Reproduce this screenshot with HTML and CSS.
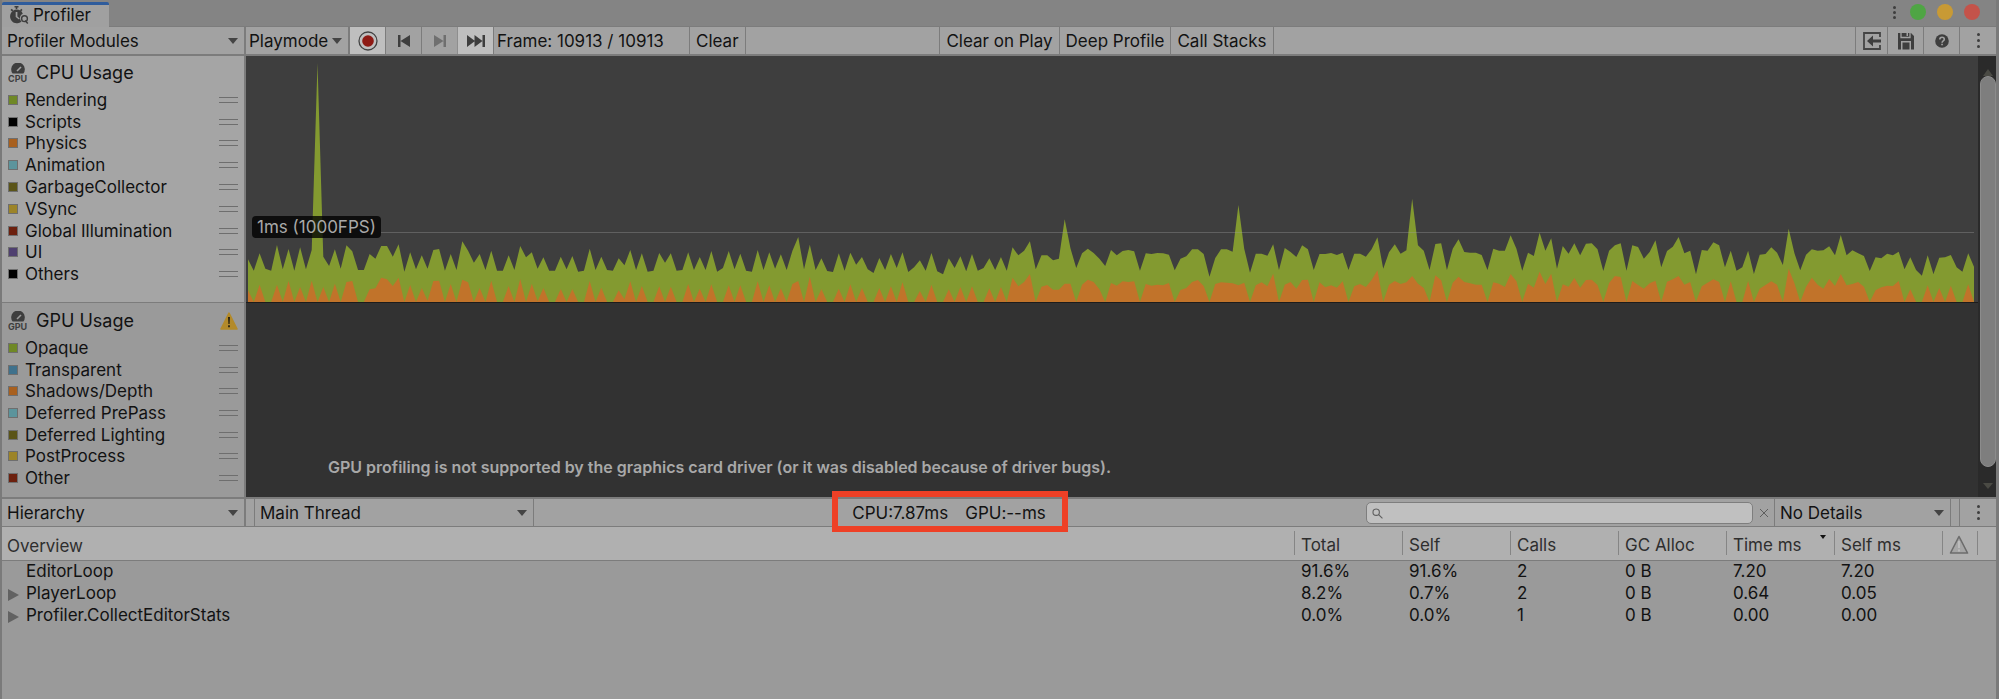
FILE: index.html
```html
<!DOCTYPE html>
<html lang="en">
<head>
  <meta charset="UTF-8"/>
  <meta name="viewport" content="width=device-width,initial-scale=1.0"/>
  <title>Profiler</title>
  <link rel="stylesheet" href="styles.css">
</head>
<body>
  <header class="titlebar">
    <div class="tab">
      <svg class="tab-icon" viewBox="0 0 20 18" width="20" height="18" aria-hidden="true">
        <path d="M5.500 0h4v1.500h-1.200v1.500h-1.600V1.500H5.500z"/>
        <path d="M1.500 4l1.200-1.200 1.600 1.400-1.200 1.200zM12.300 2.800L13.500 4l-1.400 1.400-1.200-1.200z"/>
        <path fill-rule="evenodd" d="M7.500 3.500a6.800 6.800 0 0 1 6.300 4.200c-1.800.8-2.800 2.400-2.800 4.300 0 1.500.5 2.800 1.500 3.600A6.900 6.900 0 1 1 7.500 3.500zM6.700 6v5l3.300 2.500.7-1-2.300-1.900V6z"/>
        <circle cx="15.500" cy="12.700" r="2.900" fill="none" stroke="#3e3e3e" stroke-width="1.400"/>
        <path d="M16 14.500l2.800 3" stroke="#3e3e3e" stroke-width="1.500"/>
      </svg>
      <span>Profiler</span>
    </div>
    <div class="window-buttons">
      <button class="kebab" aria-label="Tab options"><i></i><i></i><i></i></button>
      <button class="dot green" aria-label="Maximize"></button>
      <button class="dot yellow" aria-label="Minimize"></button>
      <button class="dot red" aria-label="Close"></button>
    </div>
  </header>

  <div class="toolbar">
    <div class="dropdown modules">
      <select aria-label="Profiler Modules"><option>Profiler Modules</option></select>
    </div>
    <div class="dropdown playmode">
      <select aria-label="Target"><option>Playmode</option></select>
    </div>
    <button class="step on" aria-label="Record">
      <svg viewBox="0 0 20 20" width="20" height="20"><circle cx="10" cy="10" r="9" fill="none" stroke="#444" stroke-width="1.300"/><circle cx="10" cy="10" r="5.800" fill="#8e1a14"/></svg>
    </button>
    <button class="step" aria-label="Previous frame">
      <svg viewBox="0 0 20 14" width="20" height="14"><path d="M4 1h2.500v12H4zM6.500 7L16 1v12z"/></svg>
    </button>
    <button class="step" aria-label="Next frame" disabled>
      <svg viewBox="0 0 20 14" width="20" height="14"><path d="M4 1l9.500 6L4 13zM13.500 1H16v12h-2.500z"/></svg>
    </button>
    <button class="step on" aria-label="Current frame">
      <svg viewBox="0 0 20 14" width="20" height="14"><path d="M1 1l8 6-8 6zM8.500 1l8 6-8 6zM16.500 1H19v12h-2.500z"/></svg>
    </button>
    <span class="frame">Frame: 10913 / 10913</span>
    <button>Clear</button>
    <span class="space"></span>
    <button class="first">Clear on Play</button>
    <button>Deep Profile</button>
    <button>Call Stacks</button>
    <span class="space wide"></span>
    <button class="step first" aria-label="Load">
      <svg viewBox="0 0 20 20" width="20" height="20"><path d="M18 6V2H2v16h16v-4" fill="none" stroke="#444" stroke-width="1.800"/><path d="M5 10l6-5.500v4h8v3h-8v4z"/></svg>
    </button>
    <button class="step" aria-label="Save">
      <svg viewBox="0 0 18 18" width="18" height="18"><path fill-rule="evenodd" d="M1 1h13l3 3v13.500H1zM4 9v8.500h10V9z"/><path d="M5.500 10.500h7v7h-7z"/><path d="M4 0v5.500h9V0" fill="none" stroke="#a2a2a2" stroke-width="1.300"/><path d="M9.500 1h1.500v3H9.500z" fill="#a2a2a2"/></svg>
    </button>
    <button class="step" aria-label="Help">
      <svg viewBox="0 0 14 14" width="14" height="14"><circle cx="7" cy="7" r="6.800"/><path d="M4.800 5.500C4.800 4 5.800 3.200 7 3.200s2.300.8 2.300 2.100c0 1.600-2.200 1.600-2.200 3.400" fill="none" stroke="#a2a2a2" stroke-width="1.600"/><path d="M6.200 9.700h1.700v1.600H6.200z" fill="#a2a2a2"/></svg>
    </button>
    <button class="step kebab" aria-label="Profiler options"><i></i><i></i><i></i></button>
  </div>

  <main>
    <div class="charts">
      <div class="modules-list">
        <section class="module cpu">
          <div class="legend">
            <h2>
              <svg viewBox="0 0 20 20" width="20" height="20" aria-hidden="true"><path d="M4.600 10.500a6.800 6.800 0 1 1 10.800 0z"/><path d="M9 8l4-4" stroke="#a5a5a5" stroke-width="1.600"/><text x="0" y="19">CPU</text></svg>
              CPU Usage
            </h2>
            <ul>
              <li><span class="chip rendering"></span>Rendering<span class="grip"></span></li>
              <li><span class="chip black"></span>Scripts<span class="grip"></span></li>
              <li><span class="chip orange"></span>Physics<span class="grip"></span></li>
              <li><span class="chip cyan"></span>Animation<span class="grip"></span></li>
              <li><span class="chip olive"></span>GarbageCollector<span class="grip"></span></li>
              <li><span class="chip gold"></span>VSync<span class="grip"></span></li>
              <li><span class="chip rust"></span>Global Illumination<span class="grip"></span></li>
              <li><span class="chip purple"></span>UI<span class="grip"></span></li>
              <li><span class="chip black"></span>Others<span class="grip"></span></li>
            </ul>
          </div>
          <div class="plot">
            <svg class="graph" viewBox="0 -372 298 738" preserveAspectRatio="none" role="img" aria-label="CPU time per frame">
              <polygon id="rendering" fill="#839a30"/>
              <polygon id="physics" fill="#c1732a"/>
            </svg>
            <div class="guide"><span>1ms (1000FPS)</span></div>
          </div>
        </section>
        <section class="module gpu">
          <div class="legend">
            <h2>
              <svg viewBox="0 0 20 20" width="20" height="20" aria-hidden="true"><path d="M4.600 10.500a6.800 6.800 0 1 1 10.800 0z"/><path d="M9 8l4-4" stroke="#9a9a9a" stroke-width="1.600"/><text x="0" y="19">GPU</text></svg>
              GPU Usage
              <svg class="warning" viewBox="0 0 18 18" width="18" height="18" role="img" aria-label="Warning"><path d="M9 1.200L17 17H1z" fill="#b38a2a" stroke="#b38a2a" stroke-width="1.600" stroke-linejoin="round"/><path d="M8 5h2l-.4 7H8.400zM8.100 13.300h1.800v1.900H8.100z" fill="#2a2310"/></svg>
            </h2>
            <ul>
              <li><span class="chip rendering"></span>Opaque<span class="grip"></span></li>
              <li><span class="chip blue"></span>Transparent<span class="grip"></span></li>
              <li><span class="chip orange"></span>Shadows/Depth<span class="grip"></span></li>
              <li><span class="chip cyan"></span>Deferred PrePass<span class="grip"></span></li>
              <li><span class="chip olive"></span>Deferred Lighting<span class="grip"></span></li>
              <li><span class="chip gold"></span>PostProcess<span class="grip"></span></li>
              <li><span class="chip rust"></span>Other<span class="grip"></span></li>
            </ul>
          </div>
          <div class="plot">
            <p>GPU profiling is not supported by the graphics card driver (or it was disabled because of driver bugs).</p>
          </div>
        </section>
      </div>
      <div class="scrollbar">
        <span class="arrow up"></span>
        <span class="thumb"></span>
        <span class="arrow down"></span>
      </div>
    </div>

    <div class="toolbar details">
      <div class="dropdown modules">
        <select aria-label="View"><option>Hierarchy</option></select>
      </div>
      <span class="gap"></span>
      <div class="dropdown thread">
        <select aria-label="Thread"><option>Main Thread</option></select>
      </div>
      <span class="space"></span>
      <div class="stats"><span>CPU:7.87ms</span><span>GPU:--ms</span></div>
      <span class="space"></span>
      <label class="search">
        <svg viewBox="0 0 10 10" width="11" height="11" aria-hidden="true"><circle cx="3.800" cy="3.800" r="2.900"/><path d="M6 6l3.500 3.500"/></svg>
        <input type="text" aria-label="Search">
      </label>
      <button class="clear" aria-label="Clear search"><svg viewBox="0 0 10 10" width="10" height="10"><path d="M1 1l8 8M9 1L1 9"/></svg></button>
      <div class="dropdown nodetails">
        <select aria-label="Details"><option>No Details</option></select>
      </div>
      <span class="gap"></span>
      <button class="step kebab" aria-label="Details options"><i></i><i></i><i></i></button>
    </div>

    <table>
      <colgroup>
        <col><col class="num"><col class="num"><col class="num"><col class="num"><col class="num"><col class="num"><col class="warn"><col class="end">
      </colgroup>
      <thead>
        <tr>
          <th>Overview</th>
          <th><span>Total</span></th>
          <th><span>Self</span></th>
          <th><span>Calls</span></th>
          <th><span>GC Alloc</span></th>
          <th><span class="sorted">Time ms</span></th>
          <th><span>Self ms</span></th>
          <th><span><svg viewBox="0 0 20 20" width="20" height="20" role="img" aria-label="Warnings"><path d="M10 1.500L18.500 18H1.500z" fill="#a6a6a6" stroke="#6c6c6c" stroke-width="1.600" stroke-linejoin="round"/><path d="M10 6v7M10 14.500v2" stroke="#c4c4c4" stroke-width="1.500"/></svg></span></th>
          <th><span></span></th>
        </tr>
      </thead>
      <tbody>
        <tr><td>EditorLoop</td><td>91.6%</td><td>91.6%</td><td>2</td><td>0 B</td><td>7.20</td><td>7.20</td><td></td><td></td></tr>
        <tr><td class="parent">PlayerLoop</td><td>8.2%</td><td>0.7%</td><td>2</td><td>0 B</td><td>0.64</td><td>0.05</td><td></td><td></td></tr>
        <tr><td class="parent">Profiler.CollectEditorStats</td><td>0.0%</td><td>0.0%</td><td>1</td><td>0 B</td><td>0.00</td><td>0.00</td><td></td><td></td></tr>
      </tbody>
    </table>
  </main>

  <script src="chart.js"></script>
</body>
</html>
```
FILE: styles.css
```css
:root {
  --bar: #a2a2a2; --line: #7c7c7c; --text: #121212;
  --icon: #3e3e3e; --plot: #3e3e3e;
}
* { box-sizing:border-box; margin:0; padding:0; }
body {
  background:#9a9a9a; color:var(--text);
  font-family:Inter,"Liberation Sans",sans-serif;
  font-size:17px; line-height:20px;
  display:flex; flex-direction:column;
  min-height:100vh;
  border:solid #7a7a7a; border-width:0 3px 0 2px;
}
button, select, input {
  font:inherit; color:inherit;
  background:none; border:none; border-radius:0; outline:none;
}
svg { display:block; fill:var(--icon); }

/* Title bar */
.titlebar {
  display:flex; justify-content:space-between;
  height:27px; padding-top:2px;
  background:#848484; border-bottom:1px solid var(--line);
}
.tab {
  display:flex; align-items:center; gap:4px;
  height:25px; padding:0 18px 2px 7px;
  background:#a0a0a0; border-top:3px solid #2f5c9c;
  border-radius:2px 2px 0 0;
}
.window-buttons { display:flex; align-items:center; gap:11px; padding:0 16px 4px 0; }
.dot { width:16px; height:16px; border-radius:50%; }
.green { background:#4fa544; }
.yellow { background:#c89a35; }
.red { background:#c4534a; }
.kebab {
  display:flex; flex-direction:column; gap:2px;
  align-items:center; justify-content:center; width:10px;
}
.kebab i { width:3px; height:3px; border-radius:50%; background:var(--icon); }

/* Toolbars */
.toolbar {
  display:flex; align-items:stretch;
  height:29px; background:var(--bar);
  border-bottom:2px solid var(--line);
}
.toolbar > button, .frame {
  display:flex; align-items:center; justify-content:center;
  padding:0 6px; border-right:1px solid var(--line);
  white-space:nowrap;
}
.toolbar > .first { border-left:1px solid var(--line); }
.toolbar > .step { width:36px; padding:0; }
.toolbar > .step.first { width:33px; }
.toolbar > .on { background:#bfbfbf; }
.toolbar > .kebab { border-right:none; gap:3px; }
.step:disabled { opacity:.5; }
.frame { width:196px; padding:0 3px; justify-content:flex-start; }
.space { flex:1; }
.space.wide { flex:3; }
.gap { width:10px; border-right:1px solid var(--line); }
.dropdown { display:grid; align-items:center; border-right:2px solid var(--line); }
.dropdown select {
  grid-area:1/1; width:100%; height:100%;
  padding:0 5px; appearance:none;
}
.dropdown::after {
  content:""; grid-area:1/1; justify-self:end;
  margin-right:6px; pointer-events:none;
  border:solid transparent; border-width:6px 5px 0;
  border-top-color:#444;
}
.modules { width:244px; }
.playmode { width:104px; }
.playmode select { padding:0 3px; }
.thread { width:279px; border-right-width:1px; }
.nodetails { width:177px; border-right-width:1px; border-left:1px solid var(--line); }

/* Charts */
main { flex:1; display:flex; flex-direction:column; }
.charts { display:flex; background:#323232; }
.modules-list { flex:1; }
.module { display:flex; }
.legend {
  width:244px; padding:6px 6px 0;
  border-right:2px solid var(--line);
}
.cpu .legend { height:247px; background:#a5a5a5; border-bottom:1px solid var(--line); }
.gpu .legend { height:194px; padding-top:7px; background:#9a9a9a; }
.legend h2 {
  display:flex; align-items:center; gap:8px;
  height:22px; margin-bottom:5px;
  font-size:18px; font-weight:400;
}
.legend text { font-size:9px; font-weight:700; }
.warning { margin-left:auto; }
.legend ul { display:grid; grid-auto-rows:1fr; height:196px; list-style:none; }
.gpu ul { height:152px; }
.legend li { display:flex; align-items:center; }
.chip { width:10px; height:10px; margin-right:7px; border:1px solid #6e6e6e; }
.rendering { background:#6f8826; }
.black { background:#000; }
.orange { background:#a8601f; }
.cyan { background:#5c949c; }
.blue { background:#3f718c; }
.olive { background:#5a5418; }
.gold { background:#9c8428; }
.rust { background:#6c200e; }
.purple { background:#4f4070; }
.grip {
  width:19px; height:6px; margin-left:auto;
  border:solid #6e6e6e; border-width:1px 0;
}
.plot { flex:1; display:grid; padding:0 4px 0 2px; }
.cpu .plot { background:var(--plot); border-bottom:1px solid #1c1c1c; }
.graph { grid-area:1/1; width:100%; height:246px; }
.guide {
  grid-area:1/1; align-self:start;
  display:flex; align-items:center;
  height:22px; margin:160px 0 0 4px;
}
.guide span {
  padding:1px 5px; border-radius:4px;
  background:rgba(0,0,0,.78); color:#a8a8a8;
}
.guide::after {
  content:""; flex:1; align-self:flex-end;
  height:1px; margin-bottom:5px; background:rgba(160,160,160,.35);
}
.gpu p {
  align-self:end; padding:0 0 20px 80px;
  color:#a8a8a8; font-size:16px; font-weight:600;
}
.scrollbar {
  display:flex; flex-direction:column; align-items:center;
  width:18px; padding-left:1px; background:#2a2a2a;
}
.thumb { flex:1; width:16px; border-radius:8px; background:#7e7e7e; border:1px solid #8c8c8c; }
.arrow { height:20px; border:solid transparent; }
.up { border-width:7px 5px; border-bottom-color:#4a4a44; }
.down { height:30px; border-width:16px 5px 8px; border-top:none; }
.down::before {
  content:""; display:block; margin:16px -5px 0;
  border:solid transparent; border-width:6px 5px 0; border-top-color:#4a4a44;
}

/* Details bar */
.details { height:30px; border-top:2px solid var(--line); border-bottom-width:1px; }
.details .gap { width:9px; }
.stats {
  display:flex; align-items:center; gap:17px;
  position:relative; padding:0 22px 0 20px;
}
.stats::after {
  content:""; position:absolute; inset:-8px 0 -6px;
  border:6px solid #ee4026;
}
.search {
  display:flex; align-items:center; gap:6px;
  width:387px; height:22px; margin:3px 0; padding:0 5px;
  background:#c0c0c0; border:1px solid #7e7e7e; border-radius:5px;
}
.search svg, .clear svg { fill:none; stroke:#5e5e5e; }
.search input { flex:1; min-width:0; }
.toolbar > .clear { width:21px; padding:0; border:none; }

/* Hierarchy table */
table { width:100%; table-layout:fixed; border-collapse:collapse; }
.num { width:108px; }
.warn { width:35px; }
.end { width:19px; }
th {
  height:33px; background:#b0b0b0; text-align:left;
  font-weight:400; color:#2e2e2e; vertical-align:middle;
  border-bottom:1px solid var(--line);
}
th span {
  display:flex; align-items:center; height:24px;
  padding:4px 0 0 6px; border-left:1px solid #858585;
}
th:first-child { padding:5px 0 0 5px; }
.sorted::after {
  content:""; align-self:flex-start; margin-left:18px;
  border:solid transparent; border-width:4px 3px 0; border-top-color:#111;
}
td { height:22px; padding:0 0 2px 7px; }
td:first-child { padding-left:24px; }
td.parent { padding-left:6px; }
.parent::before {
  content:""; display:inline-block; margin-right:7px;
  border:solid transparent; border-width:6px 0 6px 11px; border-left-color:#626262;
  vertical-align:-2px;
}
```
FILE: chart.js
```js
const BASE = 366;

// one entry per frame, measured down from the 1ms area; BASE is zero time
const rendering = [
  238,272,220,266,272,195,268,207,272,202,268,210,-351,230,258,208,266,196,214,270,
  270,222,236,198,198,230,193,275,217,268,226,266,210,207,272,222,270,184,212,248,
  222,270,212,272,272,226,270,198,232,217,266,232,272,272,230,268,228,275,272,206,
  270,230,270,272,235,256,210,270,220,275,272,219,248,220,272,270,217,270,231,270,
  213,275,264,213,268,221,272,275,210,270,217,266,223,270,212,171,268,194,270,235,
  273,276,220,272,218,254,231,268,279,234,270,222,264,217,276,262,241,272,219,274,
  283,235,264,229,274,222,272,264,235,270,231,272,202,226,212,184,268,226,226,241,
  236,118,205,264,220,206,219,236,258,210,226,213,210,214,272,220,222,219,220,224,
  271,236,229,208,208,222,290,234,208,208,215,75,206,278,221,221,227,193,270,204,
  216,231,196,208,270,222,222,219,225,218,270,221,221,230,208,172,266,217,193,221,
  211,56,196,212,270,192,190,270,206,178,216,218,218,225,270,206,212,212,166,206,
  272,218,228,158,212,175,266,198,221,190,226,191,190,208,273,212,196,190,272,196,
  201,236,216,181,262,213,200,171,220,212,283,210,212,187,196,262,212,272,262,212,
  282,224,222,202,218,255,146,220,271,224,208,212,211,199,226,165,226,211,220,228,
  273,232,235,221,226,215,268,232,270,287,226,282,233,232,225,262,275,220,260
];

const physics = [
  330,366,314,366,366,314,366,303,366,321,366,302,366,321,366,311,366,306,303,366,
  366,328,325,293,298,318,293,366,315,366,324,362,303,302,366,312,366,299,307,366,
  324,366,302,366,366,318,366,297,366,311,364,324,366,366,327,366,327,366,366,303,
  366,323,366,366,331,358,304,366,318,366,366,319,366,320,366,366,312,366,326,366,
  313,366,366,316,366,316,366,366,304,366,316,366,325,366,312,303,366,290,366,327,
  366,366,326,366,313,366,324,366,366,324,366,319,366,307,366,366,333,366,314,366,
  366,328,366,321,366,319,366,366,325,366,321,366,293,319,306,282,366,320,315,329,
  329,311,311,366,314,299,306,328,366,309,317,304,306,304,366,312,317,314,316,309,
  366,330,324,306,300,318,366,312,307,308,310,316,308,366,316,307,319,281,366,314,
  306,326,300,299,366,307,322,316,323,304,366,319,312,321,300,271,366,314,303,312,
  307,288,311,324,366,286,301,366,308,290,306,310,314,314,366,307,311,321,282,304,
  366,311,323,275,312,281,366,313,320,294,323,300,299,315,366,309,288,291,366,303,
  315,326,310,302,366,305,298,288,314,306,366,319,308,298,306,366,304,366,366,303,
  366,326,315,304,314,366,266,310,366,320,293,314,326,297,318,282,316,312,306,320,
  366,331,322,317,318,303,366,328,366,366,316,366,324,366,317,366,366,313,366
];

function draw(id, values) {
  const points = values.map((y, x) => `${x},${y}`);
  points.push(`${values.length - 1},${BASE}`, `0,${BASE}`);
  document.getElementById(id).setAttribute('points', points.join(' '));
}

draw('rendering', rendering);
draw('physics', physics);
```
